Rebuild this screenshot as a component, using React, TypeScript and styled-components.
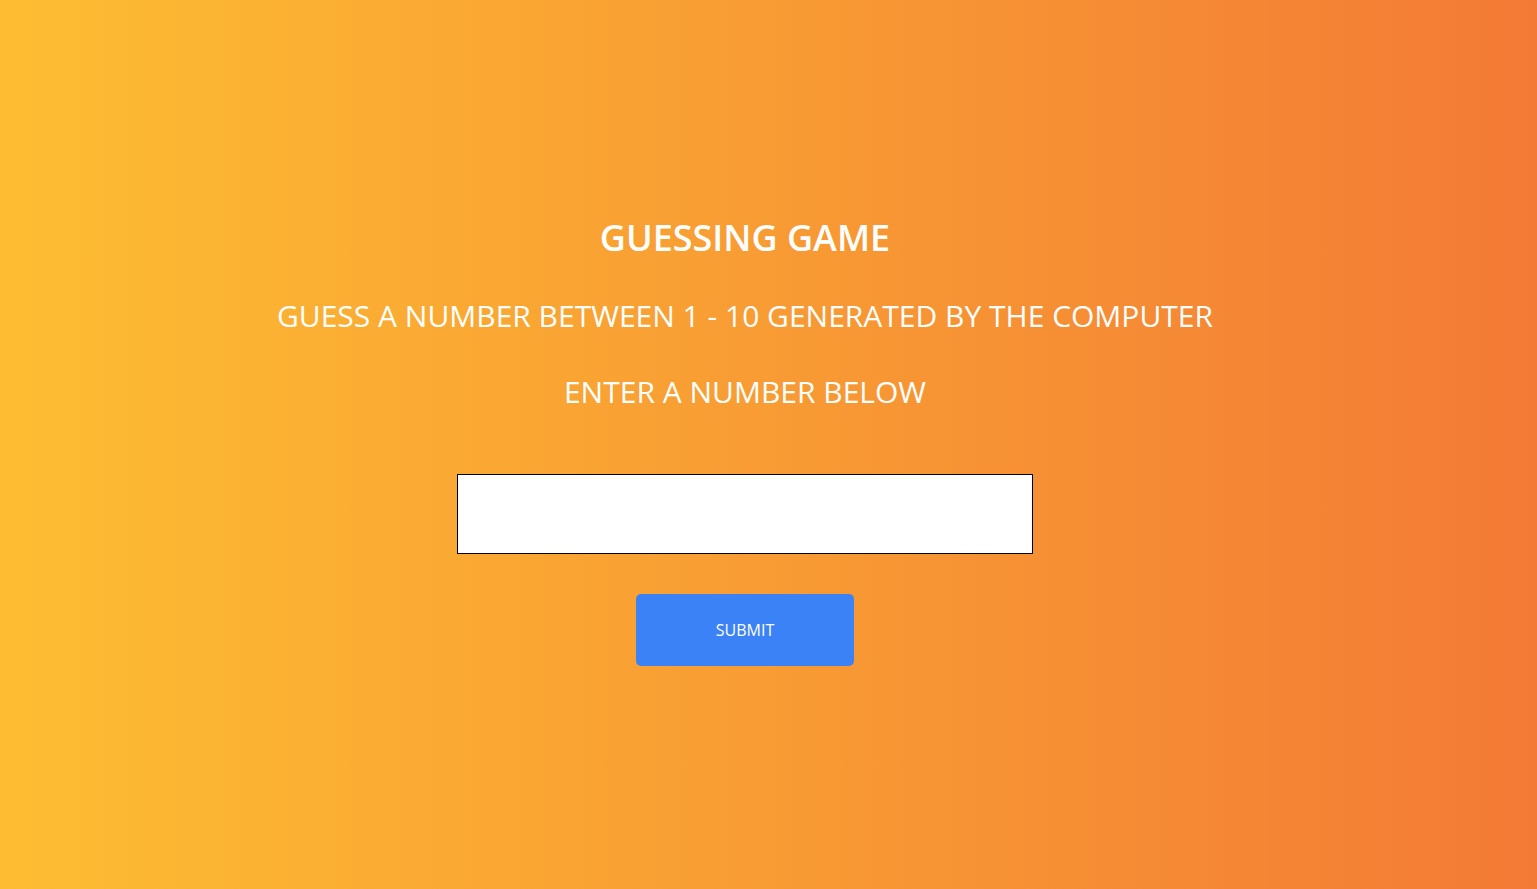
import React, { useState } from "react";
import styled, { createGlobalStyle } from "styled-components";

const GlobalStyle = createGlobalStyle`
  html, body {
    margin: 0;
    padding: 0;
  }
  body {
    font-family: "Open Sans", "Noto Sans", sans-serif;
  }
`;

const Page = styled.main`
  min-height: 889px;
  box-sizing: border-box;
  background: linear-gradient(to right, #fdbd32, #f37a35);
  padding: 0 47px 0 0;
  display: flex;
  flex-direction: column;
  align-items: center;
  color: #fff;
  text-transform: uppercase;
`;

const Title = styled.h1`
  margin: 214px 0 0;
  font-size: 36px;
  font-weight: 600;
  line-height: 48px;
`;

const Line = styled.h2<{ $top: number }>`
  margin: ${(p) => p.$top}px 0 0;
  font-size: 30px;
  font-weight: 400;
  line-height: 40px;
`;

const GuessInput = styled.input`
  margin-top: 62px;
  width: 576px;
  height: 80px;
  box-sizing: border-box;
  border: 1px solid #000;
  background: #fff;
  font-family: inherit;
  font-size: 24px;
  text-align: center;
  outline: none;
`;

const SubmitButton = styled.button`
  margin-top: 40px;
  width: 218px;
  height: 72px;
  border: none;
  border-radius: 5px;
  background: #3b82f6;
  color: #fff;
  font-family: inherit;
  font-size: 16px;
  text-transform: uppercase;
  cursor: pointer;
`;

export default function App() {
  const [guess, setGuess] = useState("");
  return (
    <Page>
      <GlobalStyle />
      <Title>Guessing Game</Title>
      <Line $top={34}>Guess a number between 1 - 10 generated by the computer</Line>
      <Line $top={36}>Enter a number below</Line>
      <GuessInput value={guess} onChange={(e) => setGuess(e.target.value)} />
      <SubmitButton>Submit</SubmitButton>
    </Page>
  );
}
